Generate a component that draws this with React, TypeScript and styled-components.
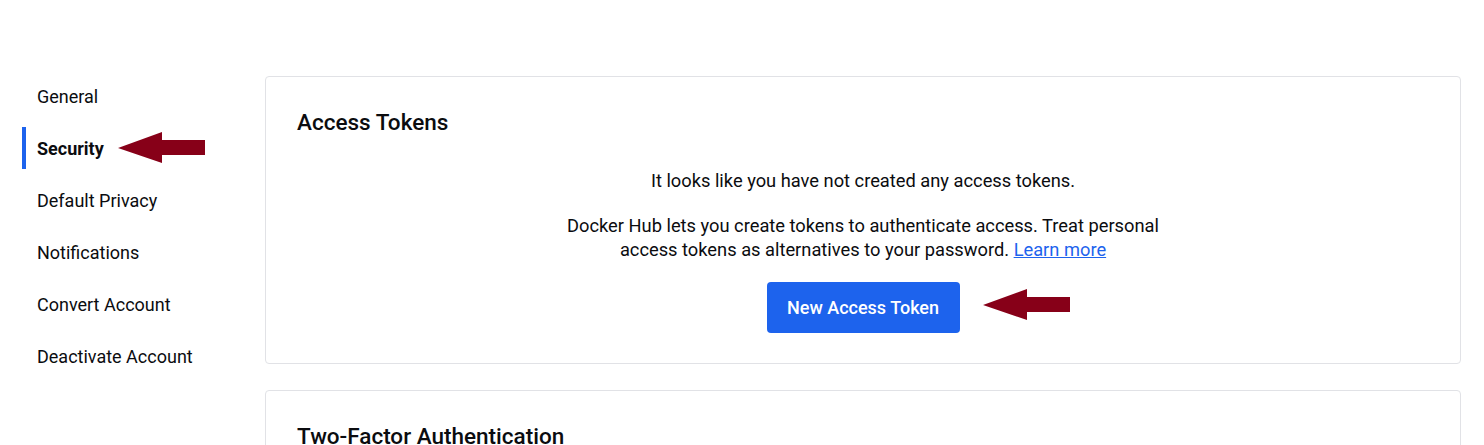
import React from "react"
import styled, { createGlobalStyle } from "styled-components"

const GlobalStyle = createGlobalStyle`
    body {
        margin: 0;
        background: #FFF;
        font-family: Roboto, "Noto Sans", sans-serif;
        color: #0b0c0f;
    }
`
const Page = styled.div`
    display: flex;
    align-items: flex-start;
    padding: 76px 23px 0 22px;
    height: 445px;
    box-sizing: border-box;
    overflow: hidden;
`
const SideNav = styled.nav`
    width: 243px;
    flex-shrink: 0;
    display: flex;
    flex-direction: column;
    gap: 10px;
    margin-top: -1px;
`
const NavItem = styled.div<{ $active?: boolean }>`
    position: relative;
    height: 42px;
    display: flex;
    align-items: center;
    padding-left: 11px;
    font-size: 18px;
    font-weight: ${p => (p.$active ? 700 : 400)};
    border-left: 4px solid ${p => (p.$active ? "#1d63ed" : "transparent")};
    box-sizing: border-box;
`
const Main = styled.main`
    flex: 1;
    display: flex;
    flex-direction: column;
    gap: 26px;
`
const Card = styled.section`
    border: 1px solid #e1e2e6;
    border-radius: 4px;
    padding: 29px 31px 30px;
    position: relative;
`
const CardTitle = styled.h2`
    margin: 0;
    font-size: 22.5px;
    font-weight: 500;
    line-height: 32px;
`
const EmptyState = styled.div`
    display: flex;
    flex-direction: column;
    align-items: center;
    text-align: center;
    margin-top: 31px;
`
const Para = styled.p`
    margin: 0 0 21px;
    font-size: 18.3px;
    line-height: 24px;
    max-width: 604px;
`
const Link = styled.a`
    color: #1d63ed;
    text-decoration: underline;
`
const PrimaryButton = styled.button`
    position: relative;
    background: #1d63ed;
    color: #FFF;
    border: none;
    border-radius: 4px;
    height: 51px;
    width: 193px;
    padding: 0;
    font-family: Roboto, "Noto Sans", sans-serif;
    font-size: 18px;
    font-weight: 500;
    margin-top: -1px;
`
const ArrowMark = styled.svg<{ $left: number; $top: number }>`
    position: absolute;
    left: ${p => p.$left}px;
    top: ${p => p.$top}px;
    overflow: visible;
`

const Arrow: React.FC<{ left: number; top: number }> = ({ left, top }) => (
    <ArrowMark $left={left} $top={top} width="88" height="32" viewBox="0 0 88 32">
        <polygon points="0,16 44,0 44,8 87,8 87,23 44,23 44,31" fill="#870018" />
    </ArrowMark>
)

const navItems = ["General", "Security", "Default Privacy", "Notifications", "Convert Account", "Deactivate Account"]

export default function App() {
    return (
        <>
            <GlobalStyle />
            <Page>
                <SideNav>
                    {navItems.map(item => (
                        <NavItem key={item} $active={item === "Security"}>
                            {item}
                            {item === "Security" && <Arrow left={92} top={5} />}
                        </NavItem>
                    ))}
                </SideNav>
                <Main>
                    <Card>
                        <CardTitle>Access Tokens</CardTitle>
                        <EmptyState>
                            <Para>It looks like you have not created any access tokens.</Para>
                            <Para>
                                Docker Hub lets you create tokens to authenticate access. Treat personal access
                                tokens as alternatives to your password. <Link href="#">Learn more</Link>
                            </Para>
                            <PrimaryButton>
                                New Access Token
                                <Arrow left={216} top={7} />
                            </PrimaryButton>
                        </EmptyState>
                    </Card>
                    <Card>
                        <CardTitle>Two-Factor Authentication</CardTitle>
                    </Card>
                </Main>
            </Page>
        </>
    )
}
